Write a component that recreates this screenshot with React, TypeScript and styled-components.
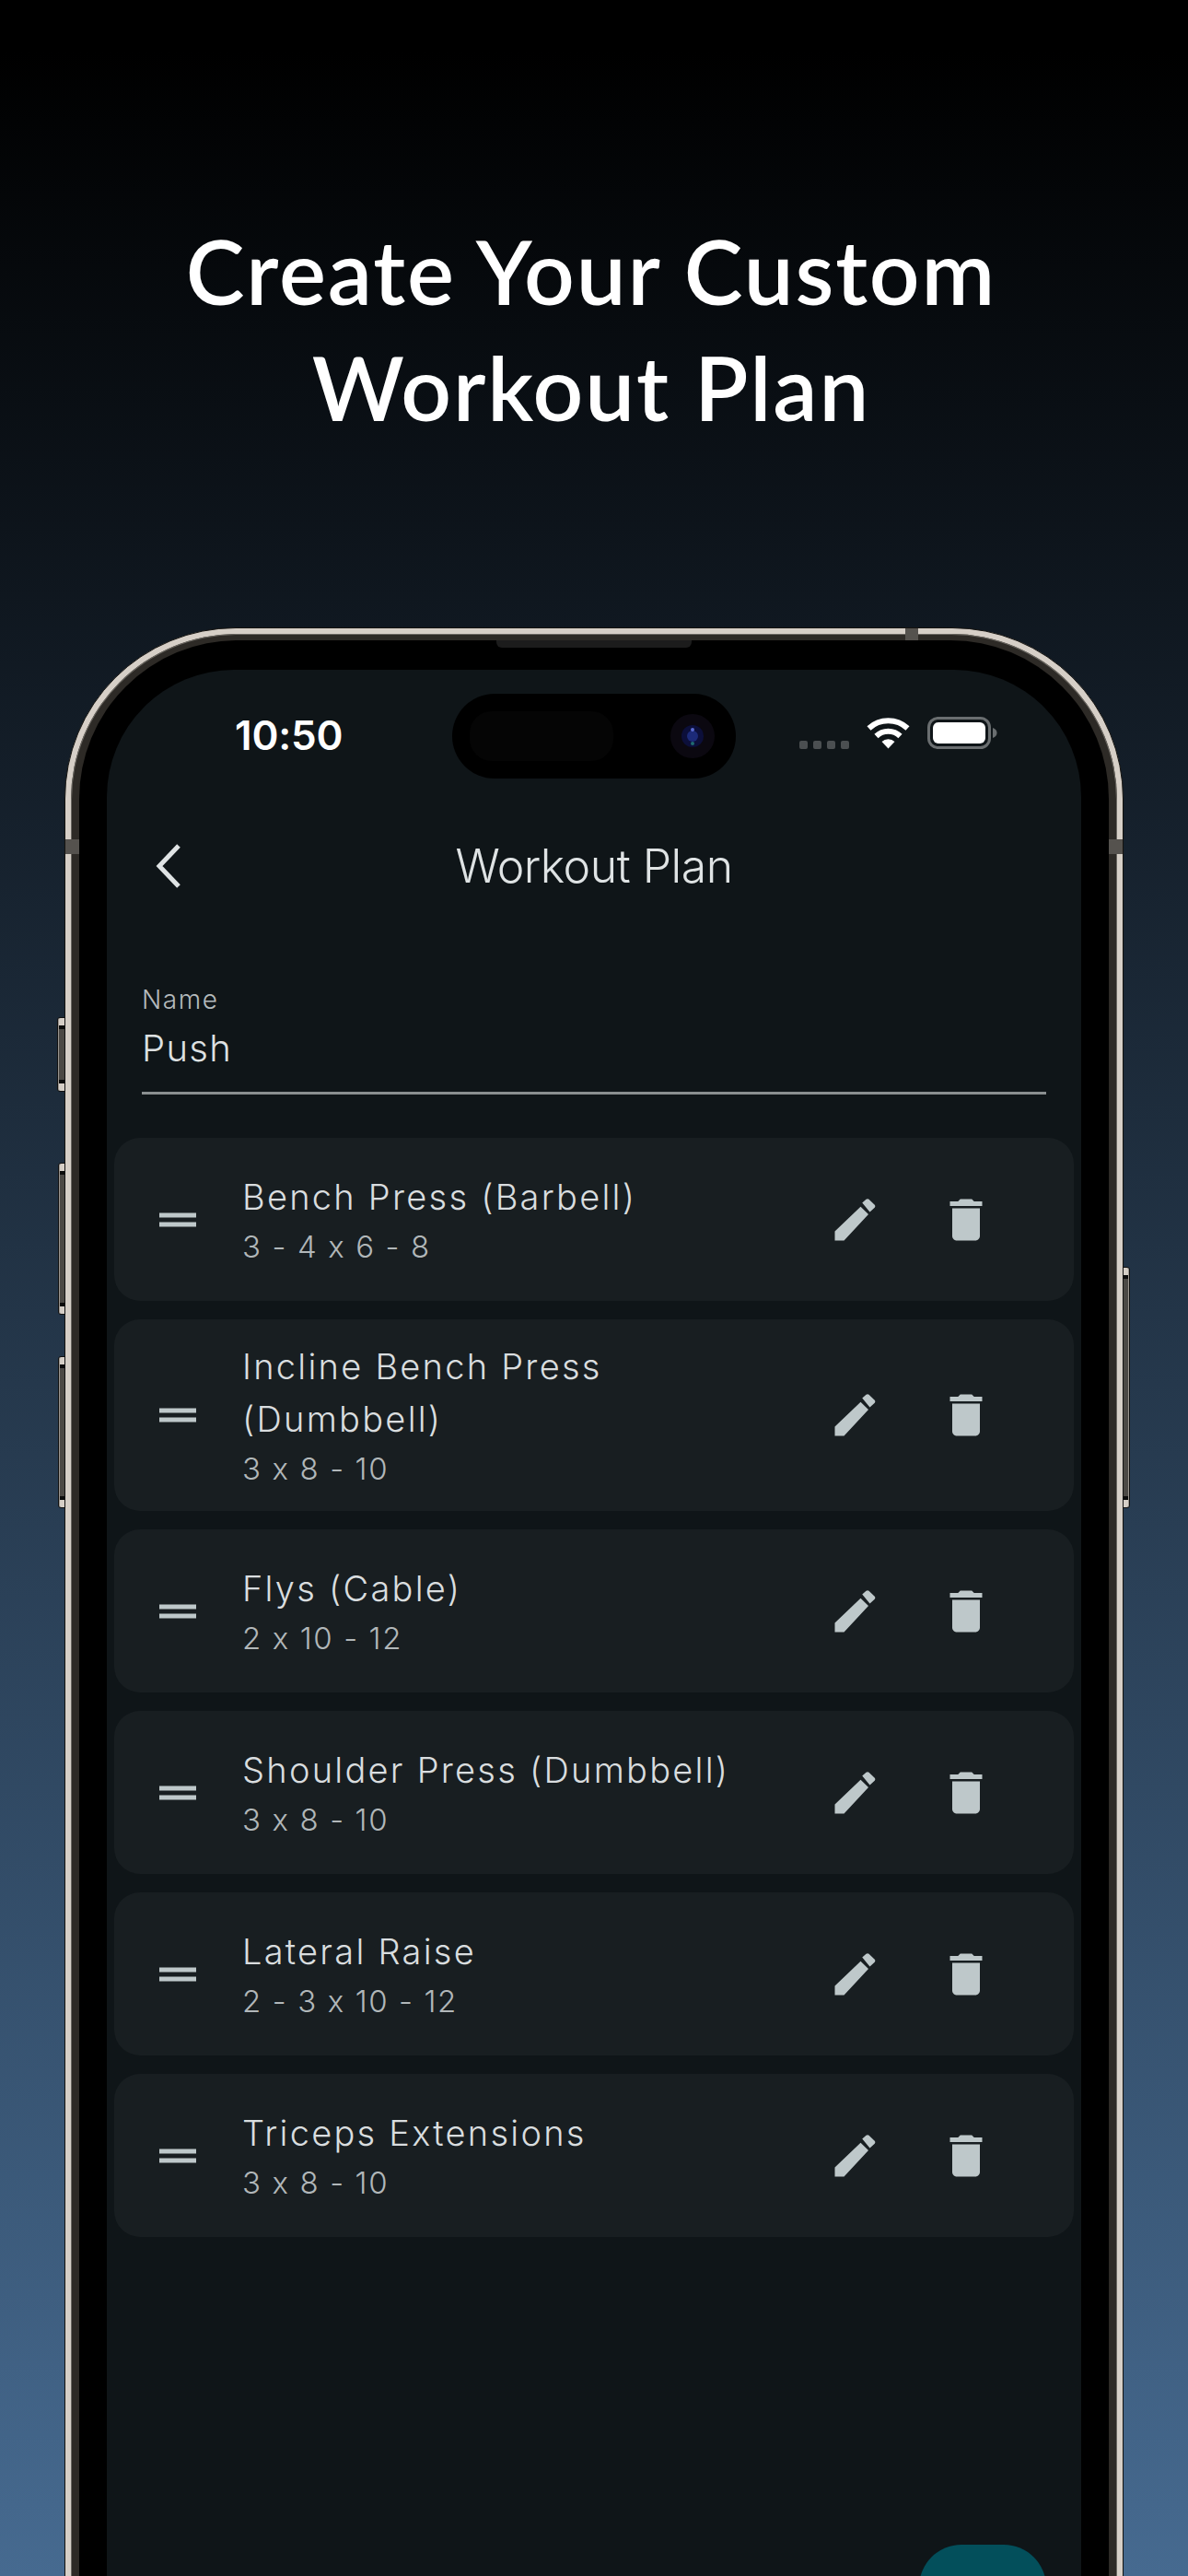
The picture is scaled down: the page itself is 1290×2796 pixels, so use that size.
import styled, { createGlobalStyle } from 'styled-components';

const GlobalStyle = createGlobalStyle`
  html, body {
    margin: 0;
    padding: 0;
    background: #000;
  }
  * {
    box-sizing: border-box;
  }
`;

const exercises = [
  { name: 'Bench Press (Barbell)', sets: '3 - 4 x 6 - 8' },
  { name: 'Incline Bench Press (Dumbbell)', sets: '3 x 8 - 10' },
  { name: 'Flys (Cable)', sets: '2 x 10 - 12' },
  { name: 'Shoulder Press (Dumbbell)', sets: '3 x 8 - 10' },
  { name: 'Lateral Raise', sets: '2 - 3 x 10 - 12' },
  { name: 'Triceps Extensions', sets: '3 x 8 - 10' },
];

const Page = styled.div`
  width: 1290px;
  height: 2796px;
  overflow: hidden;
  display: flex;
  flex-direction: column;
  background: linear-gradient(180deg, #000 0%, #000 2%, #466a90 100%);
  font-family: Inter, 'Liberation Sans', sans-serif;
`;

const Headline = styled.h1`
  flex: 0 0 681px;
  margin: 0;
  padding: 231px 6px 0 0;
  text-align: center;
  color: #fff;
  font-family: Lato, 'Liberation Sans', sans-serif;
  font-size: 96px;
  font-weight: 600;
  line-height: 126px;
  letter-spacing: 1.9px;
`;

const Phone = styled.div`
  position: relative;
  flex: 0 0 2300px;
  width: 1150px;
  margin-left: 70px;
  padding: 6px;
  border: 1px solid #15130f;
  border-radius: 186px;
  background: #d6cfc7;
`;

const SideButton = styled.div<{ $side: 'left' | 'right'; $top: number; $height: number; $wide?: boolean }>`
  position: absolute;
  top: ${(p) => p.$top}px;
  height: ${(p) => p.$height}px;
  width: ${(p) => (p.$wide ? 9 : 8)}px;
  ${(p) => p.$side}: -${(p) => (p.$wide ? 9 : 8)}px;
  border: 1px solid #111;
  border-radius: ${(p) => (p.$side === 'left' ? '3px 0 0 3px' : '0 3px 3px 0')};
  box-shadow: inset ${(p) => (p.$side === 'left' ? '1px' : '-1px')} 0 0 #9a958f;
  background: linear-gradient(180deg, #d6cfc7 0 8px, #0c0c0c 8px 12px, #4c4945 12px calc(100% - 12px), #0c0c0c calc(100% - 12px) calc(100% - 8px), #d6cfc7 calc(100% - 8px));
`;

const AntennaBand = styled.div`
  position: absolute;
  background: #55524e;
`;

const TopBand = styled(AntennaBand)`
  top: 0;
  left: 912px;
  width: 14px;
  height: 13px;
`;

const EdgeBand = styled(AntennaBand)<{ $side: 'left' | 'right' }>`
  top: 229px;
  ${(p) => p.$side}: 0;
  width: 15px;
  height: 16px;
`;

const Speaker = styled.div`
  position: absolute;
  top: 13px;
  left: 468px;
  width: 212px;
  height: 8px;
  border-radius: 0 0 6px 6px;
  background: #1c1c1c;
  z-index: 1;
`;

const Band = styled.div`
  height: 100%;
  padding: 7px 9px 0;
  border-radius: 180px;
  background: #2d2a26;
  box-shadow: inset 0 0 0 1px #6b6862;
`;

const Bezel = styled.div`
  height: 100%;
  padding: 32px 30px 0;
  border-radius: 172px;
  background: #000;
`;

const Screen = styled.div`
  position: relative;
  height: 100%;
  border-radius: 138px;
  background: #0f1518;
`;

const StatusBar = styled.div`
  display: grid;
  grid-template-columns: 375px 308px 1fr;
  height: 118px;
  padding-top: 26px;
`;

const Clock = styled.div`
  padding: 23px 0 0 139px;
  color: #fff;
  font-size: 44px;
  font-weight: 600;
  line-height: 44px;
  letter-spacing: -0.2px;
`;

const Island = styled.div`
  display: flex;
  align-items: center;
  justify-content: space-between;
  height: 92px;
  padding: 0 22px 0 19px;
  border-radius: 46px;
  background: #000;
`;

const IslandSensor = styled.div`
  width: 156px;
  height: 54px;
  border-radius: 24px;
  background: #050505;
`;

const Indicators = styled.div`
  display: flex;
  align-items: flex-end;
  height: 60px;
  padding-left: 69px;
`;

const SignalDots = styled.div`
  display: flex;
  gap: 6px;
  margin-right: 19px;
`;

const SignalDot = styled.span`
  width: 9px;
  height: 9px;
  border-radius: 2px;
  background: #4b4f51;
`;

const NavBar = styled.div`
  position: relative;
  display: flex;
  align-items: center;
  justify-content: center;
  height: 100px;
  margin-top: 45px;
  color: #dfe3e4;
  font-size: 50px;
  font-weight: 300;
  letter-spacing: -0.5px;
`;

const BackButton = styled.svg`
  position: absolute;
  left: 52px;
  top: 25px;
`;

const NameField = styled.div`
  margin: 78px 38px 0 38px;
  padding-bottom: 21px;
  border-bottom: 3px solid #8a8f90;
`;

const FieldLabel = styled.div`
  color: #b4babc;
  font-size: 28px;
  font-weight: 300;
  line-height: 34px;
  letter-spacing: 1.6px;
`;

const FieldValue = styled.div`
  margin-top: 10px;
  color: #dde0e1;
  font-size: 40px;
  font-weight: 300;
  line-height: 52px;
  letter-spacing: 1.3px;
`;

const ExerciseList = styled.div`
  display: flex;
  flex-direction: column;
  gap: 20px;
  margin: 47px 8px 0 8px;
`;

const ExerciseCard = styled.div`
  display: flex;
  align-items: center;
  min-height: 177px;
  padding: 22px 87px 22px 39px;
  border-radius: 28px;
  background: #181e21;
`;

const Glyph = styled.svg`
  flex: none;
  fill: #bec8ca;
`;

const ExerciseText = styled.div`
  flex: 1;
  max-width: 560px;
  margin: 1px 0 -1px 40px;
`;

const ExerciseName = styled.div`
  color: #d9dddf;
  font-size: 38px;
  font-weight: 350;
  line-height: 57px;
  letter-spacing: 2.25px;
`;

const ExerciseSets = styled.div`
  color: #b1b7b9;
  font-size: 33px;
  font-weight: 300;
  line-height: 50px;
  letter-spacing: 1.6px;
`;

const Actions = styled.div`
  display: flex;
  gap: 60px;
  margin-left: auto;
`;

const AddButton = styled.div`
  position: absolute;
  top: 2035px;
  left: 882px;
  width: 138px;
  height: 138px;
  border-radius: 46px;
  background: #034f5b;
`;

function DragHandle() {
  return (
    <Glyph width={60} height={60} viewBox="0 0 24 24">
      <path d="M20 9H4v2h16V9zM4 15h16v-2H4v2z" />
    </Glyph>
  );
}

function EditIcon() {
  return (
    <Glyph width={60} height={60} viewBox="0 0 24 24">
      <path d="M3 17 14.2 6.300l3.400 3.300L7 21H3v-4zM14.900 4.600l1.700-1.500c.4-.3.9-.3 1.200 0l2.500 2.400c.3.3.3.8 0 1.200L18.200 8.600z" />
    </Glyph>
  );
}

function DeleteIcon() {
  return (
    <Glyph width={60} height={60} viewBox="0 0 24 24">
      <path d="M6 19c0 1.100.9 2 2 2h8c1.100 0 2-.9 2-2V7H6v12zM19 4h-3.500l-1-1h-5l-1 1H5v2h14V4z" />
    </Glyph>
  );
}

function WifiIcon() {
  return (
    <svg width={47} height={35} viewBox="0 0 47 35" style={{ marginRight: 19 }}>
      <path d="M2.500 12.500a31 31 0 0 1 42 0" fill="none" stroke="#fff" strokeWidth={6} />
      <path d="M10.500 21a18.500 18.500 0 0 1 26 0" fill="none" stroke="#fff" strokeWidth={6} />
      <path d="M16.500 27a10 10 0 0 1 14 0L23.500 34.500z" fill="#fff" />
    </svg>
  );
}

function BatteryIcon() {
  return (
    <svg width={76} height={35} viewBox="0 0 76 35">
      <rect x={1.5} y={1.5} width={66} height={32} rx={10} fill="none" stroke="#6a6e70" strokeWidth={3} />
      <rect x={6} y={6} width={57} height={23} rx={6} fill="#fff" />
      <path d="M71 12c3 1 4.500 3 4.500 5.500S74 22 71 23z" fill="#6a6e70" />
    </svg>
  );
}

function CameraLens() {
  return (
    <svg width={50} height={50} viewBox="0 0 50 50">
      <circle cx={25} cy={25} r={24} fill="#0b0810" />
      <circle cx={25} cy={25} r={12} fill="#0c0f3a" />
      <circle cx={25} cy={25} r={6} fill="#1c2a78" />
      <circle cx={25} cy={18} r={2} fill="#5a6ad0" />
      <circle cx={25} cy={33} r={2} fill="#1f6a70" />
    </svg>
  );
}

export default function App() {
  return (
    <>
      <GlobalStyle />
      <Page>
        <Headline>
          Create Your Custom
          <br />
          Workout Plan
        </Headline>
        <Phone>
          <SideButton $side="left" $top={422} $height={81} $wide />
          <SideButton $side="left" $top={580} $height={165} />
          <SideButton $side="left" $top={790} $height={165} />
          <SideButton $side="right" $top={693} $height={262} />
          <TopBand />
          <EdgeBand $side="left" />
          <EdgeBand $side="right" />
          <Speaker />
          <Band>
            <Bezel>
              <Screen>
                <StatusBar>
                  <Clock>10:50</Clock>
                  <Island>
                    <IslandSensor />
                    <CameraLens />
                  </Island>
                  <Indicators>
                    <SignalDots>
                      <SignalDot />
                      <SignalDot />
                      <SignalDot />
                      <SignalDot />
                    </SignalDots>
                    <WifiIcon />
                    <BatteryIcon />
                  </Indicators>
                </StatusBar>
                <NavBar>
                  <BackButton width={30} height={50} viewBox="0 0 30 50">
                    <path d="M26 3L5 25l21 22" fill="none" stroke="#dfe3e4" strokeWidth={5} />
                  </BackButton>
                  Workout Plan
                </NavBar>
                <NameField>
                  <FieldLabel>Name</FieldLabel>
                  <FieldValue>Push</FieldValue>
                </NameField>
                <ExerciseList>
                  {exercises.map((exercise) => (
                    <ExerciseCard key={exercise.name}>
                      <DragHandle />
                      <ExerciseText>
                        <ExerciseName>{exercise.name}</ExerciseName>
                        <ExerciseSets>{exercise.sets}</ExerciseSets>
                      </ExerciseText>
                      <Actions>
                        <EditIcon />
                        <DeleteIcon />
                      </Actions>
                    </ExerciseCard>
                  ))}
                </ExerciseList>
                <AddButton />
              </Screen>
            </Bezel>
          </Band>
        </Phone>
      </Page>
    </>
  );
}
